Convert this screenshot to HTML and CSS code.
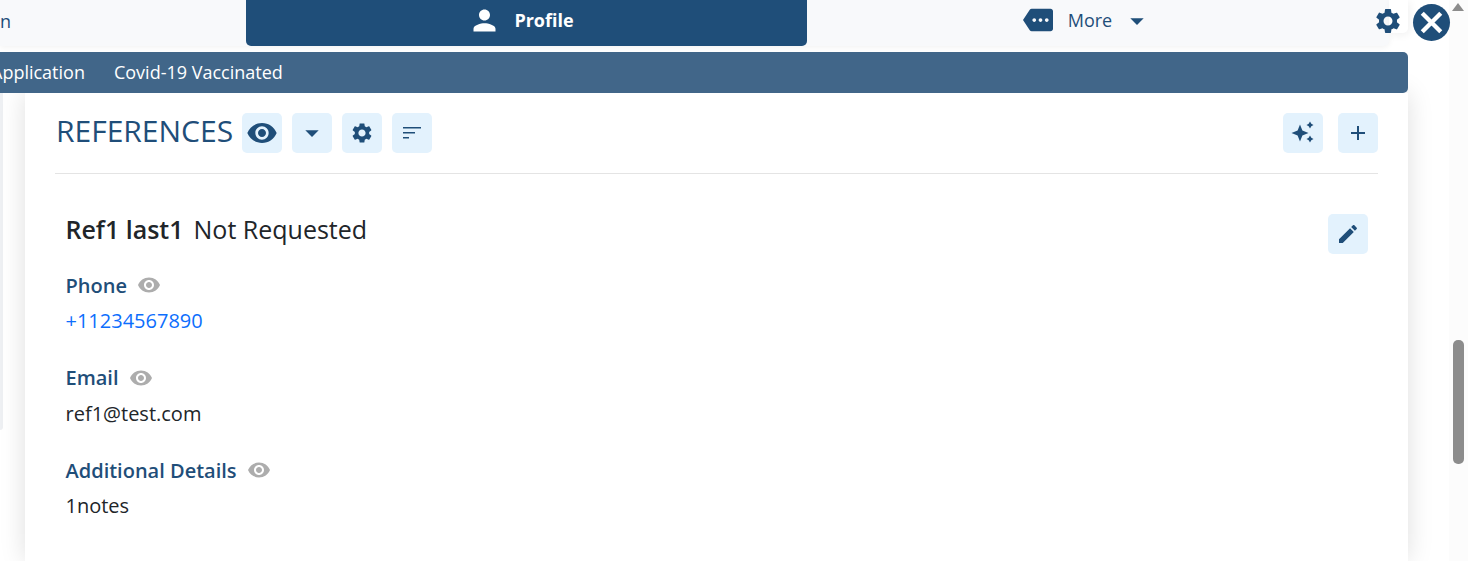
FILE: index.html
```html
<!DOCTYPE html>
<html lang="en">
<head>
  <meta charset="UTF-8">
  <title>Profile - References</title>
  <link rel="stylesheet" href="styles.css">
</head>
<body>

  <!-- Iconos -->
  <svg class="icon-defs" width="0" height="0">
    <symbol id="i-eye" viewBox="0 0 24 24"><path d="M12 4.5C7 4.5 2.73 7.61 1 12c1.73 4.39 6 7.5 11 7.5s9.27-3.11 11-7.5c-1.73-4.39-6-7.5-11-7.5zM12 17c-2.76 0-5-2.24-5-5s2.24-5 5-5 5 2.24 5 5-2.24 5-5 5zm0-8c-1.66 0-3 1.34-3 3s1.34 3 3 3 3-1.34 3-3-1.34-3-3-3z"/></symbol>
    <symbol id="i-gear" viewBox="0 0 24 24"><path d="M19.14 12.94c.04-.3.06-.61.06-.94 0-.32-.02-.64-.07-.94l2.03-1.58c.18-.14.23-.41.12-.61l-1.92-3.32c-.12-.22-.37-.29-.59-.22l-2.39.96c-.5-.38-1.03-.7-1.62-.94l-.36-2.54c-.04-.24-.24-.41-.48-.41h-3.84c-.24 0-.43.17-.47.41l-.36 2.54c-.59.24-1.13.57-1.62.94l-2.39-.96c-.22-.08-.47 0-.59.22L2.74 8.87c-.12.21-.08.47.12.61l2.03 1.58c-.05.3-.09.63-.09.94s.02.64.07.94l-2.03 1.58c-.18.14-.23.41-.12.61l1.92 3.32c.12.22.37.29.59.22l2.39-.96c.5.38 1.03.7 1.62.94l.36 2.54c.05.24.24.41.48.41h3.84c.24 0 .44-.17.47-.41l.36-2.54c.59-.24 1.13-.56 1.62-.94l2.39.96c.22.08.47 0 .59-.22l1.92-3.32c.12-.22.07-.47-.12-.61l-2.01-1.58zM12 15.6c-1.98 0-3.6-1.62-3.6-3.6s1.62-3.6 3.6-3.6 3.6 1.62 3.6 3.6-1.62 3.6-3.6 3.6z"/></symbol>
    <symbol id="i-drop" viewBox="0 0 24 24"><path d="M7 10l5 5 5-5z"/></symbol>
  </svg>

  <div class="app">
    <div class="main">

      <div class="top-row">
        <nav class="tabs">
          <a class="tab tab-prev">n</a>
          <a class="tab tab-active">
            <svg class="tab-icon" viewBox="0 0 24 24"><path d="M12 12c2.21 0 4-1.79 4-4s-1.79-4-4-4-4 1.79-4 4 1.79 4 4 4zm0 2c-2.67 0-8 1.34-8 4v2h16v-2c0-2.66-5.33-4-8-4z"/></svg>
            Profile
          </a>
          <a class="tab tab-more">
            <svg class="more-icon" viewBox="0 0 24 24"><path d="M22 3H7c-.69 0-1.23.35-1.59.88L0 12l5.41 8.11c.36.53.9.89 1.59.89h15c1.1 0 2-.9 2-2V5c0-1.1-.9-2-2-2zM9 13.5c-.83 0-1.5-.67-1.5-1.5s.67-1.5 1.5-1.5 1.5.67 1.5 1.5-.67 1.5-1.5 1.5zm5 0c-.83 0-1.5-.67-1.5-1.5s.67-1.5 1.5-1.5 1.5.67 1.5 1.5-.67 1.5-1.5 1.5zm5 0c-.83 0-1.5-.67-1.5-1.5s.67-1.5 1.5-1.5 1.5.67 1.5 1.5-.67 1.5-1.5 1.5z"/></svg>
            More
            <svg class="more-caret"><use href="#i-drop"/></svg>
          </a>
        </nav>
        <div class="settings-box"></div>
        <svg class="settings-icon"><use href="#i-gear"/></svg>
      </div>

      <div class="subnav">
        <a class="subnav-item subnav-first">Application</a>
        <a class="subnav-item">Covid-19 Vaccinated</a>
      </div>

      <div class="content">
        <div class="side-panel"></div>
        <section class="card">
          <header class="card-head">
            <h2 class="card-title">REFERENCES</h2>
            <button class="btn-icon"><svg class="ic-eye"><use href="#i-eye"/></svg></button>
            <button class="btn-icon"><svg class="ic-caret"><use href="#i-drop"/></svg></button>
            <button class="btn-icon"><svg class="ic-24"><use href="#i-gear"/></svg></button>
            <button class="btn-icon">
              <svg class="ic-24" viewBox="0 0 24 24"><path d="M3 6h18v1.5H3zM3 11h12v1.5H3zM3 16h6v1.5H3z"/></svg>
            </button>
            <div class="head-right">
              <button class="btn-icon">
                <svg class="ic-24" viewBox="0 0 24 24"><path d="M9 3.500l2.400 6.100 6.100 2.400-6.100 2.400L9 20.500l-2.400-6.100L.5 12l6.100-2.400zM19 .5l1.300 2.200 2.200 1.300-2.200 1.300L19 7.500l-1.300-2.200L15.500 4l2.200-1.300zM19 14.500l1.300 2.200 2.200 1.300-2.200 1.300-1.300 2.200-1.300-2.200-2.200-1.300 2.200-1.300z"/></svg>
              </button>
              <button class="btn-icon">
                <svg class="ic-24" viewBox="0 0 24 24"><path d="M11 5h2v6h6v2h-6v6h-2v-6H5v-2h6z"/></svg>
              </button>
            </div>
          </header>

          <article class="ref">
            <div class="ref-head">
              <h3 class="ref-name"><strong>Ref1 last1</strong><span>Not Requested</span></h3>
              <button class="btn-icon">
                <svg class="ic-24" viewBox="0 0 24 24"><path d="M3 17.250V21h3.750L17.810 9.940l-3.750-3.750L3 17.250zM20.710 7.040c.39-.39.39-1.020 0-1.410l-2.340-2.340c-.39-.39-1.020-.39-1.410 0l-1.830 1.830 3.750 3.750 1.830-1.830z"/></svg>
              </button>
            </div>

            <div class="field">
              <div class="field-label">Phone <svg class="ic-muted"><use href="#i-eye"/></svg></div>
              <a class="field-value field-link">+11234567890</a>
            </div>
            <div class="field">
              <div class="field-label">Email <svg class="ic-muted"><use href="#i-eye"/></svg></div>
              <div class="field-value">ref1@test.com</div>
            </div>
            <div class="field">
              <div class="field-label">Additional Details <svg class="ic-muted"><use href="#i-eye"/></svg></div>
              <div class="field-value">1notes</div>
            </div>
          </article>
        </section>
      </div>
    </div>

    <!-- Boton cerrar flotante -->
    <button class="btn-close">
      <svg viewBox="0 0 24 24"><path d="M6 6l12 12M18 6L6 18"/></svg>
    </button>

    <div class="scrollbar">
      <div class="scroll-up"></div>
      <div class="scroll-thumb"></div>
    </div>
  </div>

</body>
</html>
```

FILE: styles.css
```css
body {
  margin: 0;
  background-color: #fff;
  font-family: 'Open Sans', 'Liberation Sans', sans-serif;
  color: #212529;
  overflow: hidden;
}

.icon-defs {
  position: absolute;
}

.app {
  display: flex;
  height: 561px;
  overflow: hidden;
  position: relative;
}

.main {
  width: 1408px;
  flex-shrink: 0;
  display: flex;
  flex-direction: column;
}

/* Tabs superiores */
.top-row {
  display: flex;
  height: 46px;
  margin-bottom: 6px;
  position: relative;
  flex-shrink: 0;
}

.tabs {
  width: 1389px;
  display: flex;
  background-color: #f8f9fb;
  border-bottom-right-radius: 5px;
  box-shadow: 0 1px 6px rgba(0, 0, 0, 0.06);
}

.tab {
  display: flex;
  align-items: center;
  font-size: 18px;
  color: #1f4e79;
}

.tab-prev {
  width: 246px;
  padding-bottom: 5px;
  box-sizing: border-box;
}

.tab-active {
  width: 561px;
  justify-content: center;
  gap: 13px;
  padding-right: 11px;
  box-sizing: border-box;
  background-color: #1f4e79;
  color: #fff;
  font-weight: 700;
  border-radius: 0 0 5px 5px;
  padding-bottom: 6px;
}

.tab-icon {
  width: 33px;
  height: 33px;
  fill: #fff;
  margin-top: 1px;
}

.tab-more {
  width: 562px;
  justify-content: center;
  padding-bottom: 6px;
}

.more-icon {
  width: 30px;
  height: 30px;
  fill: #1f4e79;
  margin-right: 15px;
}

.more-caret {
  width: 32px;
  height: 32px;
  fill: #1f4e79;
  margin-left: 9px;
  margin-top: 2px;
}

.settings-box {
  width: 19px;
  height: 33px;
  background-color: #fff;
  border-bottom-right-radius: 5px;
  box-shadow: 2px 2px 8px rgba(0, 0, 0, 0.06);
}

.settings-icon {
  position: absolute;
  left: 1373px;
  top: 6px;
  width: 30px;
  height: 30px;
  fill: #1f4e79;
}

/* Barra secundaria */
.subnav {
  height: 41px;
  padding-bottom: 2px;
  box-sizing: border-box;
  flex-shrink: 0;
  display: flex;
  align-items: center;
  gap: 29px;
  overflow: hidden;
  background-color: #416689;
  border-radius: 0 5px 5px 0;
  color: #fff;
  font-size: 18px;
  font-weight: 500;
  position: relative;
  z-index: 2;
}

.subnav-first {
  margin-left: -9px;
}

/* Contenido */
.content {
  flex: 1;
  padding-left: 25px;
  position: relative;
  min-height: 0;
}

.side-panel {
  position: absolute;
  left: 0;
  top: 0;
  width: 3px;
  height: 337px;
  background-color: #eef0f3;
  border-bottom-right-radius: 4px;
}

.card {
  height: 100%;
  box-sizing: border-box;
  padding: 20px 30px 0;
  background-color: #fff;
  box-shadow: 0 0 24px rgba(0, 0, 0, 0.13);
  position: relative;
}

.card-head {
  display: flex;
  align-items: center;
  gap: 10px;
  padding-bottom: 20px;
  border-bottom: 1px solid #e4e4e4;
}

.card-title {
  margin: -4px -1px 0 1px;
  font-size: 30px;
  font-weight: 400;
  line-height: 40px;
  color: #1f4e79;
}

.head-right {
  margin-left: auto;
  display: flex;
  gap: 15px;
}

.btn-icon {
  width: 40px;
  height: 40px;
  padding: 0;
  border: none;
  border-radius: 5px;
  background-color: #e3f2fd;
  display: flex;
  justify-content: center;
  align-items: center;
  fill: #1f4e79;
}

.ic-24 {
  width: 24px;
  height: 24px;
}

.ic-caret {
  width: 32px;
  height: 32px;
}

.ic-eye {
  width: 32px;
  height: 32px;
}

.ic-muted {
  width: 24px;
  height: 24px;
  fill: #adadad;
  margin-left: 10px;
}

/* Referencia */
.ref {
  padding: 40px 10px 0 10.5px;
}

.ref-head {
  display: flex;
  justify-content: space-between;
  align-items: flex-start;
  height: 40px;
  margin-bottom: 19px;
}

.ref-name {
  margin: -1px 0 0;
  font-size: 25px;
  font-weight: 400;
  line-height: 32px;
  display: flex;
  gap: 10px;
}

.ref-name strong {
  font-weight: 600;
}

.field {
  margin-bottom: 31.5px;
}

.field-label {
  display: flex;
  align-items: center;
  height: 24px;
  font-size: 20px;
  font-weight: 600;
  color: #1f4e79;
  margin-bottom: 11px;
}

.field-value {
  display: block;
  font-size: 20px;
  line-height: 26px;
}

.field-link {
  color: #0d6efd;
}

/* Boton cerrar */
.btn-close {
  position: absolute;
  left: 1413px;
  top: 4px;
  width: 37px;
  height: 37px;
  padding: 0;
  border: none;
  border-radius: 50%;
  background-color: #1f4e79;
  z-index: 5;
}

.btn-close svg {
  display: block;
  width: 37px;
  height: 37px;
  fill: none;
  stroke: #fff;
  stroke-width: 2.8;
}

/* Scrollbar */
.scrollbar {
  margin-left: 41px;
  flex: 1;
  background-color: #fcfcfc;
  position: relative;
}

.scroll-up {
  width: 0;
  height: 0;
  margin: 3px 0 0 3px;
  border-left: 6px solid transparent;
  border-right: 6px solid transparent;
  border-bottom: 8px solid #8c8c8c;
}

.scroll-thumb {
  width: 11px;
  height: 124px;
  margin: 329px 0 0 4px;
  border-radius: 5px;
  background-color: #8c8c8c;
}
```
